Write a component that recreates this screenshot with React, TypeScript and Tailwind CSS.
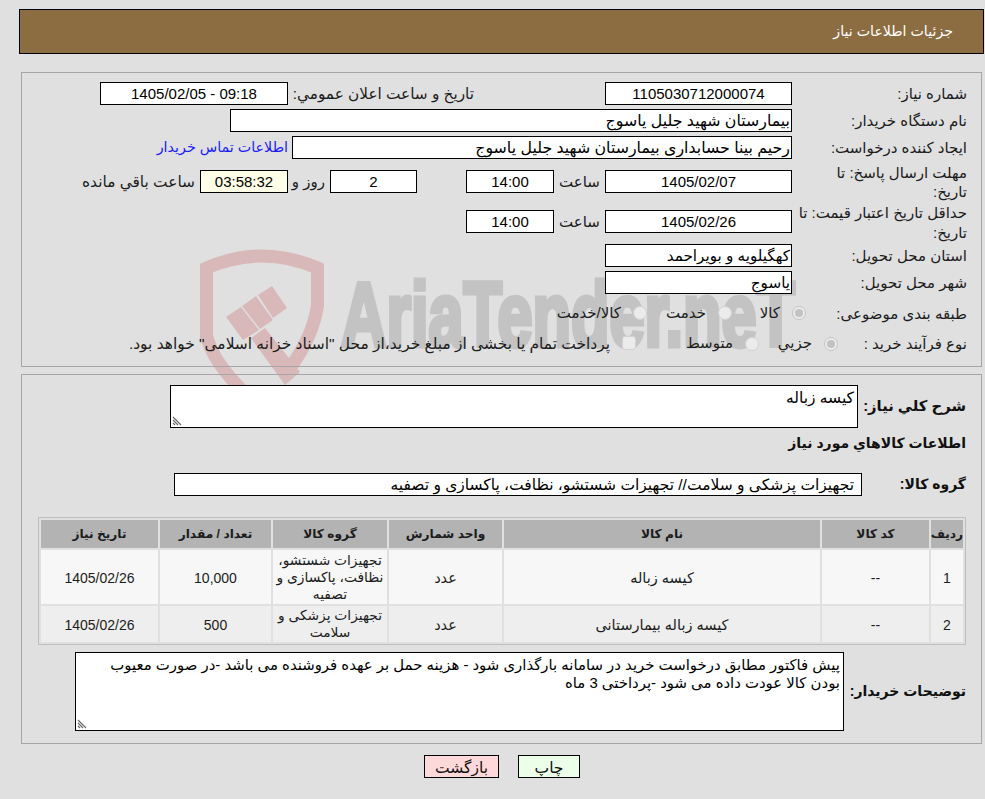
import React from "react";

const box = "border border-black bg-white h-[23px] flex items-center leading-none text-black shrink-0";
const num = box + " justify-center text-[15px]";
const txt = box + " justify-start pr-[1px]";

function Label({ children, className = "" }: { children: React.ReactNode; className?: string }) {
  return <div className={"text-[15px] leading-[22px] text-[#1c1c1c] shrink-0 pt-[1px] " + className}>{children}</div>;
}

function Radio({ label, width, checked }: { label: string; width: string; checked?: boolean }) {
  return (
    <div className={"flex items-center gap-[12px] shrink-0 " + width}>
      <span className={"w-[14px] h-[14px] rounded-full border flex items-center justify-center " + (checked ? "border-[#c4c4c4] bg-[#ececec]" : "border-[#d2d2d2] bg-[#ebebeb]")}>
        {checked && <span className="w-[8px] h-[8px] rounded-full bg-[#c2c2c2]" />}
      </span>
      <span className="text-[15px] text-[#1c1c1c]">{label}</span>
    </div>
  );
}

// faded logo behind the form
function Watermark() {
  return (
    <svg className="absolute left-0 top-0" width="985" height="392" viewBox="0 0 985 392">
      <path d="M206.5 340 L206.5 268 Q262 244 317.5 268 L317.5 305 Q313 338 287 372" fill="none" stroke="#d9b8ba" strokeWidth="13" />
      <path d="M206.5 335 Q212 362 248 396" fill="none" stroke="#d9b8ba" strokeWidth="13" />
      <g fill="#d9b8ba">
        <path d="M226 317 L241 307 L259 330 L243 340 Z" />
        <path d="M242 306 L256 296 L273 320 L260 329 Z" />
        <path d="M258 295 L272 286 L287 308 L273 318 Z" />
        <path d="M251 338 L265 328 L300 372 L285 385 Z" />
      </g>
      <text x="341" y="346" fontFamily="Liberation Sans" fontWeight="700" fontSize="90" textLength="454" lengthAdjust="spacingAndGlyphs" direction="ltr" fill="#c3c3c3" stroke="#c3c3c3" strokeWidth="5">AriaTender.neT</text>
    </svg>
  );
}

function Row({ children, className = "" }: { children: React.ReactNode; className?: string }) {
  return <div className={"flex items-center " + className}>{children}</div>;
}

function Grip() {
  return (
    <svg className="absolute left-[1px] bottom-[1px]" width="11" height="11" viewBox="0 0 11 11">
      <path d="M1 2 L9 10 M1 5 L6 10 M1 8 L3 10" stroke="#666" strokeWidth="1.1" />
    </svg>
  );
}

const th = "bg-[#b3b3b3] font-bold text-[12.2px] text-[#1c1c1c] text-center align-middle h-[28px] p-0";
const td = "text-center align-middle text-[14.5px] text-[#1c1c1c] p-0 pt-[2px] leading-[17px]";
const tdGroup = "text-center align-middle text-[13.8px] text-[#1c1c1c] p-0 leading-[17px] whitespace-nowrap";
const tdNum = "text-center align-middle text-[14px] text-[#1c1c1c] p-0 pt-[2px]";
const bold = "font-bold text-[14px] text-[#111] shrink-0";

export default function App() {
  return (
    <div dir="rtl" className="relative w-[985px] h-[799px] bg-[#e0e0e0] overflow-hidden font-['Liberation_Sans','DejaVu_Sans',sans-serif] text-[#111]">
      <Watermark />

      <div className="relative pt-[9px] pl-[19px] pr-[1px]">
        <div className="h-[45px] bg-[#8c6d42] border border-black flex items-center pr-[30px] pt-[1px] text-white text-[14.2px]">جزئیات اطلاعات نیاز</div>
      </div>

      <div className="relative mt-[18px] ml-[21px] mr-[3px] h-[295px] border border-[#a6a6a6] pt-[7px] pr-[14px]">
        <div className="flex flex-col">
          <Row className="h-[27px]">
            <Label className="w-[175px]">شماره نیاز:</Label>
            <div className={num + " w-[187px]"}>1105030712000074</div>
            <Label className="w-[181px] mr-[131px] whitespace-nowrap !text-[15.3px]">تاریخ و ساعت اعلان عمومي:</Label>
            <div dir="ltr" className={num + " w-[188px] mr-[5px]"}>1405/02/05 - 09:18</div>
          </Row>
          <Row className="h-[27px]">
            <Label className="w-[175px]">نام دستگاه خریدار:</Label>
            <div className={txt + " w-[562px] text-[15.8px]"}>بیمارستان شهید جلیل یاسوج</div>
          </Row>
          <Row className="h-[27px]">
            <Label className="w-[175px]">ایجاد کننده درخواست:</Label>
            <div className={txt + " w-[500px] text-[15.8px]"}>رحیم بینا حسابداری بیمارستان شهید جلیل یاسوج</div>
            <a className="mr-[4px] text-[14.3px] text-[#1a1aff]">اطلاعات تماس خریدار</a>
          </Row>
          <Row className="h-[40px]">
            <Label className="w-[175px] !leading-[19px]">مهلت ارسال پاسخ: تا<br />تاریخ:</Label>
            <div className={num + " w-[187px]"}>1405/02/07</div>
            <Label className="w-[51px] text-center">ساعت</Label>
            <div className={num + " w-[88px]"}>14:00</div>
            <div className={num + " w-[87px] mr-[49px]"}>2</div>
            <Label className="mr-[5px] w-[37px]">روز و</Label>
            <div className={num + " w-[88px] !bg-[#ffffe8]"}>03:58:32</div>
            <Label className="mr-[5px] !text-[15.4px]">ساعت باقي مانده</Label>
          </Row>
          <Row className="h-[40px]">
            <Label className="w-[175px] !leading-[20px] !pt-[3px]">حداقل تاریخ اعتبار قیمت: تا<br />تاریخ:</Label>
            <div className={num + " w-[187px]"}>1405/02/26</div>
            <Label className="w-[51px] text-center">ساعت</Label>
            <div className={num + " w-[88px]"}>14:00</div>
          </Row>
          <Row className="h-[27px] mt-[1px]">
            <Label className="w-[175px]">استان محل تحویل:</Label>
            <div className={txt + " w-[187px] text-[15.2px]"}>کهگیلویه و بویراحمد</div>
          </Row>
          <Row className="h-[27px]">
            <Label className="w-[175px]">شهر محل تحویل:</Label>
            <div className={txt + " w-[187px] text-[15.2px]"}>یاسوج</div>
          </Row>
          <Row className="h-[34px]">
            <Label className="w-[161px]">طبقه بندی موضوعی:</Label>
            <Radio label="کالا" width="w-[74px]" checked />
            <Radio label="خدمت" width="w-[85px]" />
            <Radio label="کالا/خدمت" width="" />
          </Row>
          <Row className="h-[27px]">
            <Label className="w-[129px]">نوع فرآیند خرید :</Label>
            <Radio label="جزیي" width="w-[79px]" checked />
            <Radio label="متوسط" width="w-[123px]" />
            <div className="flex items-center gap-[12px] shrink-0">
              <span className="w-[14px] h-[14px] rounded-[3px] border border-[#d2d2d2] bg-[#ebebeb]" />
              <span className="text-[15.45px] text-[#1c1c1c]">پرداخت تمام یا بخشی از مبلغ خرید،از محل "اسناد خزانه اسلامی" خواهد بود.</span>
            </div>
          </Row>
        </div>
      </div>

      <div className="relative mt-[7px] ml-[21px] mr-[3px] h-[370px] border border-[#a6a6a6] pr-[15px] pt-[10px]">
        <Row>
          <div className="font-bold text-[14.8px] text-[#111] shrink-0 w-[108px]">شرح كلي نياز:</div>
          <div className="relative w-[688px] h-[43px] border border-black bg-white pr-[3px] pt-[3px] text-[15.5px] leading-[18px] text-black">
            کیسه زباله
            <Grip />
          </div>
        </Row>
        <div className={bold + " mt-[3px] h-[24px] leading-[24px]"}>اطلاعات كالاهاي مورد نياز</div>
        <Row className="mt-[18px]">
          <div className={bold + " w-[104px]"}>گروه کالا:</div>
          <div className="w-[688px] h-[23px] border border-black bg-white flex items-center pr-[7px] text-[15.5px] text-black">تجهیزات پزشکی و سلامت// تجهیزات شستشو، نظافت، پاکسازی و تصفیه</div>
        </Row>
        <div className="mt-[21px] ml-[16px] border border-[#bdbdbd]">
          <table className="w-full border-separate border-spacing-[2px] table-fixed">
            <colgroup>
              <col className="w-[32px]" /><col className="w-[107px]" /><col className="w-[316px]" /><col className="w-[113px]" /><col className="w-[114px]" /><col className="w-[111px]" /><col />
            </colgroup>
            <thead>
              <tr>{["ردیف", "کد کالا", "نام کالا", "واحد شمارش", "گروه کالا", "تعداد / مقدار", "تاریخ نیاز"].map((h) => <th key={h} className={th}>{h}</th>)}</tr>
            </thead>
            <tbody>
              <tr className="bg-[#f7f7f7] h-[54px]">
                <td className={tdNum}>1</td><td className={tdNum}>--</td><td className={td}>کیسه زباله</td><td className={td}>عدد</td>
                <td className={tdGroup}>تجهیزات شستشو،<br />نظافت، پاکسازی و<br />تصفیه</td><td className={tdNum}>10,000</td><td className={tdNum}>1405/02/26</td>
              </tr>
              <tr className="bg-[#eeeeee] h-[36px]">
                <td className={tdNum}>2</td><td className={tdNum}>--</td><td className={td}>کیسه زباله بیمارستانی</td><td className={td}>عدد</td>
                <td className={tdGroup}>تجهیزات پزشکی و<br />سلامت</td><td className={tdNum}>500</td><td className={tdNum}>1405/02/26</td>
              </tr>
            </tbody>
          </table>
        </div>
        <Row className="mt-[7px]">
          <div className={bold + " w-[122px] whitespace-nowrap"}>توضیحات خریدار:</div>
          <div className="relative w-[769px] h-[79px] border border-black bg-white pr-[3px] pl-[30px] pt-[4px] text-[14.9px] leading-[17.5px] text-black">
            پیش فاکتور مطابق درخواست خرید در سامانه بارگذاری شود - هزینه حمل بر عهده فروشنده می باشد -در صورت معیوب بودن کالا عودت داده می شود -پرداختی 3 ماه
            <Grip />
          </div>
        </Row>
      </div>

      <div className="relative flex gap-[19px] mt-[11px] pr-[405px]">
        <button className="w-[62px] h-[23px] border border-black bg-[#ecffe8] text-[15.5px]">چاپ</button>
        <button className="w-[75px] h-[23px] border border-black bg-[#ffd9d9] text-[15.5px]">بازگشت</button>
      </div>
    </div>
  );
}
